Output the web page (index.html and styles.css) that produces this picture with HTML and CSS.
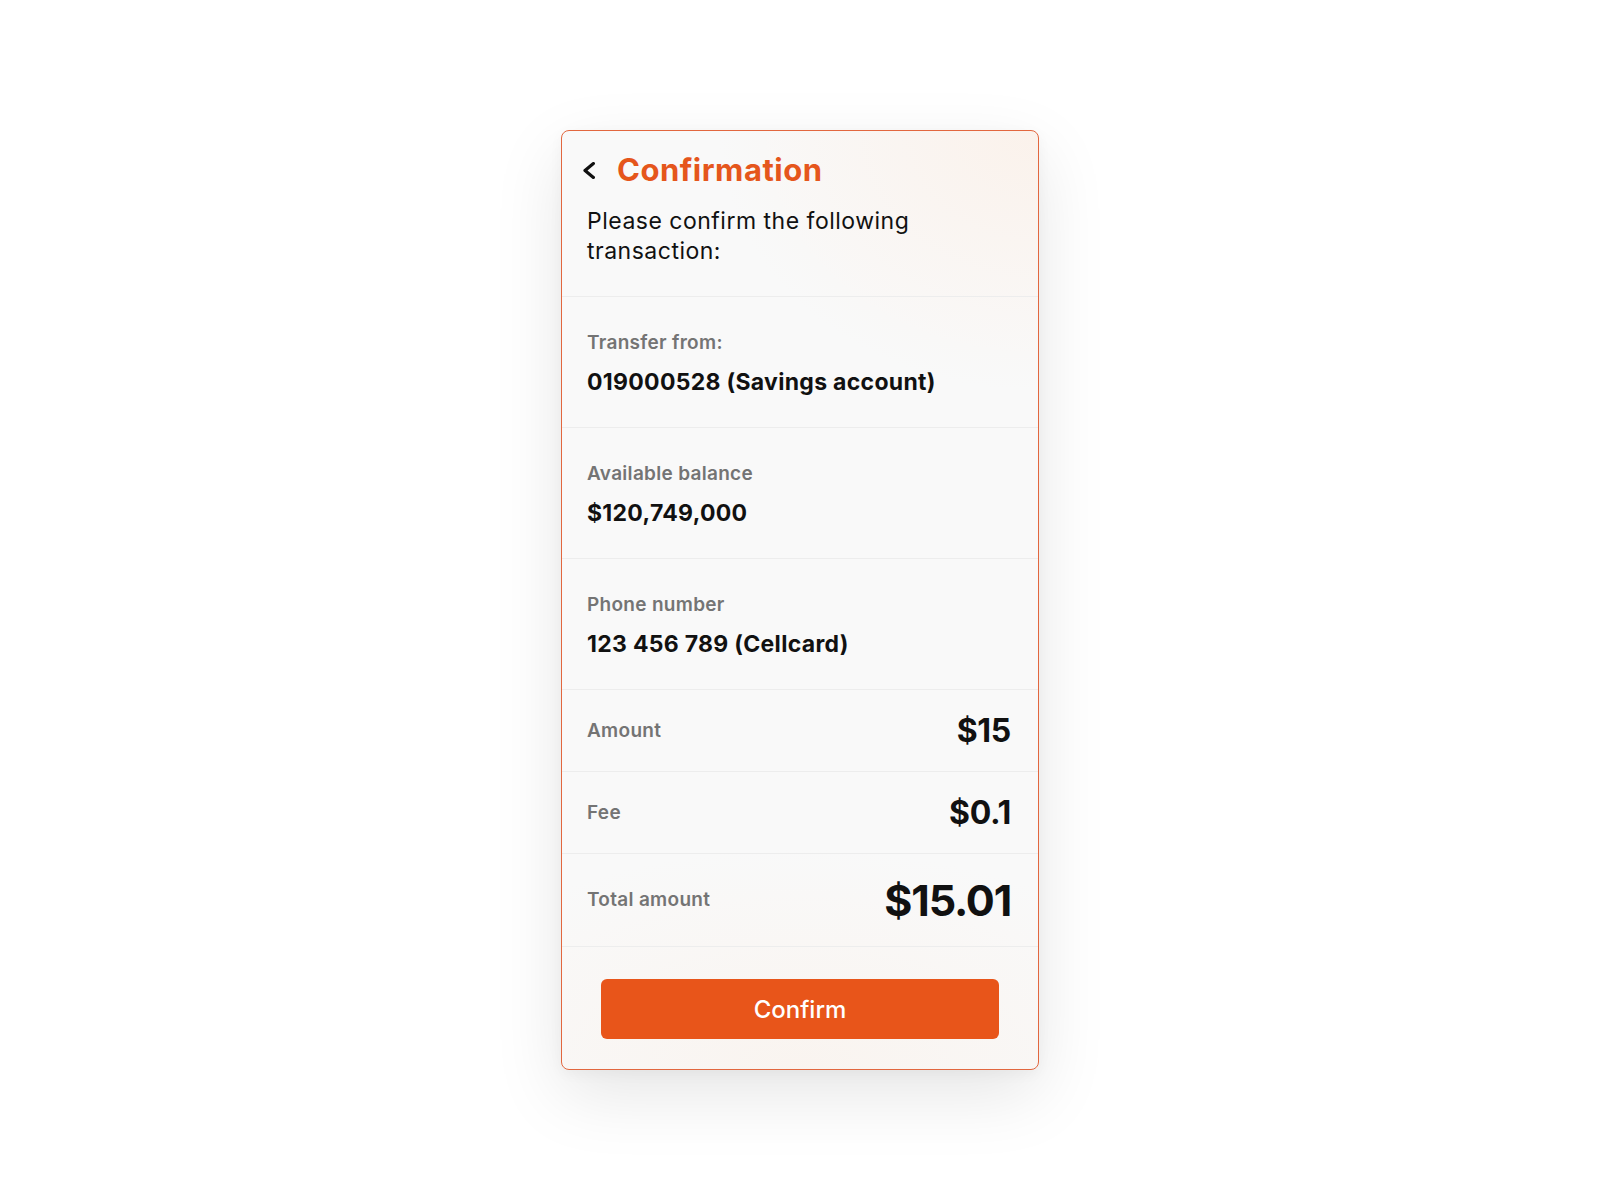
FILE: index.html
```html
<!DOCTYPE html>
<html lang="en">
<head>
<meta charset="utf-8">
<title>Confirmation</title>
<link rel="stylesheet" href="styles.css">
</head>
<body>
<main class="card">
  <header class="card-header">
    <div class="title-row">
      <svg class="back-icon" viewBox="0 0 12 17" width="12" height="17" aria-hidden="true">
        <path d="M10.4 1.6 L2 8.5 L10.4 15.4" fill="none" stroke="#111" stroke-width="3.2" stroke-linecap="round" stroke-linejoin="round"/>
      </svg>
      <h1 class="title">Confirmation</h1>
    </div>
    <p class="subtitle">Please confirm the following<br>transaction:</p>
  </header>

  <section class="detail">
    <div class="detail-label">Transfer from:</div>
    <div class="detail-value">019000528 (Savings account)</div>
  </section>
  <section class="detail">
    <div class="detail-label">Available balance</div>
    <div class="detail-value">$120,749,000</div>
  </section>
  <section class="detail">
    <div class="detail-label">Phone number</div>
    <div class="detail-value">123 456 789 (Cellcard)</div>
  </section>

  <div class="row">
    <span class="row-label">Amount</span>
    <span class="row-value">$15</span>
  </div>
  <div class="row">
    <span class="row-label">Fee</span>
    <span class="row-value">$0.1</span>
  </div>
  <div class="row row-total">
    <span class="row-label">Total amount</span>
    <span class="row-value">$15.01</span>
  </div>

  <footer class="card-footer">
    <button class="confirm-btn" type="button">Confirm</button>
  </footer>
</main>
</body>
</html>
```

FILE: styles.css
```css
* {
  box-sizing: border-box;
}

html, body {
  margin: 0;
  padding: 0;
  background: #ffffff;
}

body {
  min-height: 100vh;
  display: flex;
  align-items: center;
  justify-content: center;
  font-family: "Inter", "Noto Sans", "Liberation Sans", sans-serif;
  color: #111111;
}

.card {
  width: 478px;
  border: 1px solid #e2673f;
  border-radius: 8px;
  background:
    radial-gradient(ellipse 320px 260px at 100% 0%, rgba(252, 236, 224, 0.55), rgba(252, 236, 224, 0) 100%),
    radial-gradient(ellipse 420px 220px at 50% 100%, rgba(250, 238, 228, 0.45), rgba(250, 238, 228, 0) 100%),
    #f9f9f9;
  box-shadow: 0 24px 70px rgba(0, 0, 0, 0.10), 0 4px 14px rgba(0, 0, 0, 0.04);
  overflow: hidden;
}

.card-header {
  padding: 19px 27px 30px 25px;
}

.title-row {
  display: flex;
  align-items: center;
  height: 40px;
}

.back-icon {
  display: block;
  margin-left: -4px;
  margin-right: 22px;
  flex: none;
}

.title {
  margin: 0;
  font-size: 31px;
  line-height: 40px;
  font-weight: 700;
  color: #e5561c;
  letter-spacing: 0.5px;
}

.subtitle {
  margin: 16px 0 0;
  font-size: 23px;
  line-height: 30px;
  font-weight: 400;
  color: #111111;
  letter-spacing: 0.5px;
}

.detail {
  border-top: 1px solid #ededed;
  padding: 34px 27px 30px 25px;
}

.detail-label {
  font-size: 19px;
  line-height: 24px;
  font-weight: 600;
  color: #747474;
  letter-spacing: 0.3px;
}

.detail-value {
  margin-top: 12px;
  font-size: 23px;
  line-height: 30px;
  font-weight: 700;
  color: #111111;
  letter-spacing: 0.3px;
}

.row {
  border-top: 1px solid #ededed;
  display: flex;
  align-items: center;
  justify-content: space-between;
  padding: 20px 27px 20px 25px;
}

.row-label {
  font-size: 19px;
  line-height: 24px;
  font-weight: 600;
  color: #747474;
  letter-spacing: 0.3px;
}

.row-value {
  font-size: 32px;
  line-height: 41px;
  font-weight: 700;
  color: #111111;
  letter-spacing: -0.3px;
}

.row-total {
  padding-top: 20px;
  padding-bottom: 20px;
}

.row-total .row-value {
  font-size: 43px;
  line-height: 52px;
  letter-spacing: -1.2px;
}

.card-footer {
  border-top: 1px solid #ededed;
  padding: 32px 39px 30px;
}

.confirm-btn {
  display: block;
  width: 100%;
  height: 60px;
  border: none;
  border-radius: 6px;
  background: #e8551a;
  color: #ffffff;
  font-family: "Inter", "Noto Sans", "Liberation Sans", sans-serif;
  font-size: 24px;
  font-weight: 500;
  cursor: pointer;
}
```
